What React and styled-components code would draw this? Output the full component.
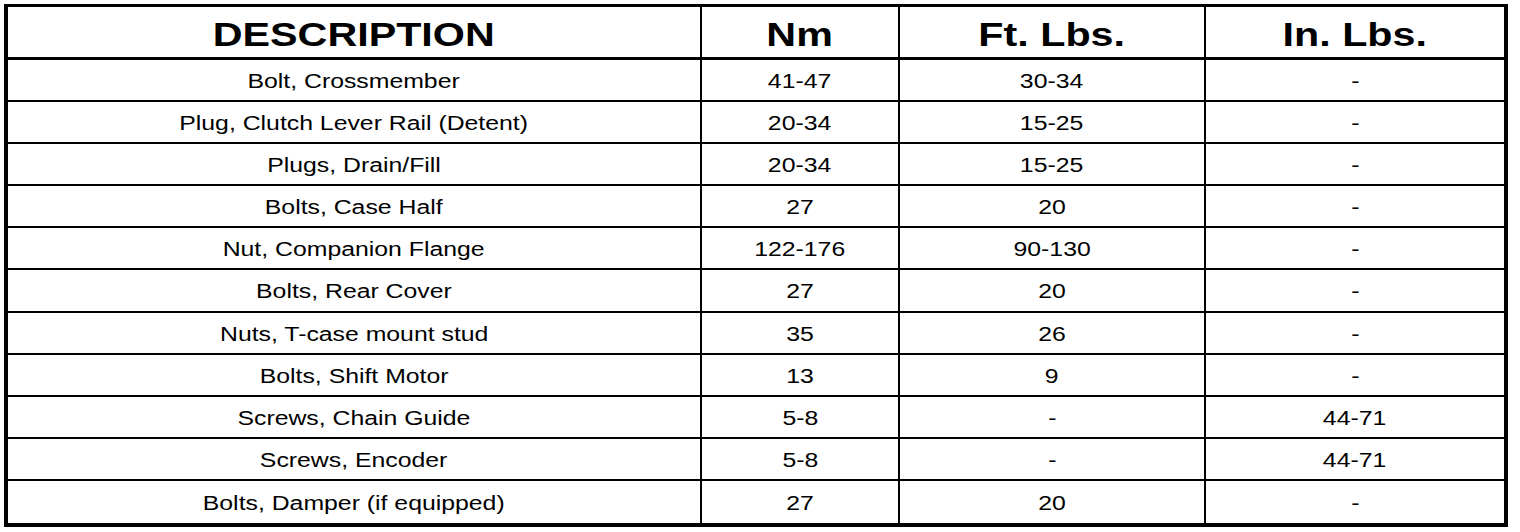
import React from "react";
import styled, { createGlobalStyle } from "styled-components";

const GlobalStyle = createGlobalStyle`
  html, body {
    margin: 0;
    padding: 0;
    background: #ffffff;
  }
  body {
    font-family: "Liberation Sans", Arial, sans-serif;
    color: #000;
  }
`;

const rows = [
  ["Bolt, Crossmember", "41-47", "30-34", "-"],
  ["Plug, Clutch Lever Rail (Detent)", "20-34", "15-25", "-"],
  ["Plugs, Drain/Fill", "20-34", "15-25", "-"],
  ["Bolts, Case Half", "27", "20", "-"],
  ["Nut, Companion Flange", "122-176", "90-130", "-"],
  ["Bolts, Rear Cover", "27", "20", "-"],
  ["Nuts, T-case mount stud", "35", "26", "-"],
  ["Bolts, Shift Motor", "13", "9", "-"],
  ["Screws, Chain Guide", "5-8", "-", "44-71"],
  ["Screws, Encoder", "5-8", "-", "44-71"],
  ["Bolts, Damper (if equipped)", "27", "20", "-"],
];

const Page = styled.div`
  padding: 4px;
  width: 1512px;
  box-sizing: border-box;
`;

const Grid = styled.div`
  display: grid;
  grid-template-columns: 694px 198px 306px 298px;
  grid-template-rows: 53px repeat(11, 1fr);
  width: 1504px;
  height: 523px;
  box-sizing: border-box;
  border: 4px solid #000;
  border-top-width: 3px;
`;

const Cell = styled.div`
  display: flex;
  align-items: center;
  justify-content: center;
  overflow: hidden;
  box-sizing: border-box;
  border-right: ${(p) => (p.$last ? "none" : "2px solid #000")};
  border-bottom: ${(p) =>
    p.$head ? "3px solid #000" : p.$bottom ? "none" : "2px solid #000"};
`;

const HeadText = styled.span`
  display: inline-block;
  font-size: 33px;
  font-weight: bold;
  line-height: 1;
  white-space: nowrap;
  transform: scaleX(1.25);
  padding-top: 4px;
`;

const BodyText = styled.span`
  display: inline-block;
  font-size: 20px;
  line-height: 1;
  white-space: nowrap;
  transform: scaleX(1.24);
  padding-top: 2px;
`;

const headers = ["DESCRIPTION", "Nm", "Ft. Lbs.", "In. Lbs."];

export default function App() {
  return (
    <Page>
      <GlobalStyle />
      <Grid>
        {headers.map((h, i) => (
          <Cell key={h} $head $last={i === 3}>
            <HeadText>{h}</HeadText>
          </Cell>
        ))}
        {rows.map((row, r) =>
          row.map((val, c) => (
            <Cell
              key={r + "-" + c}
              $last={c === 3}
              $bottom={r === rows.length - 1}
            >
              <BodyText>{val}</BodyText>
            </Cell>
          ))
        )}
      </Grid>
    </Page>
  );
}
